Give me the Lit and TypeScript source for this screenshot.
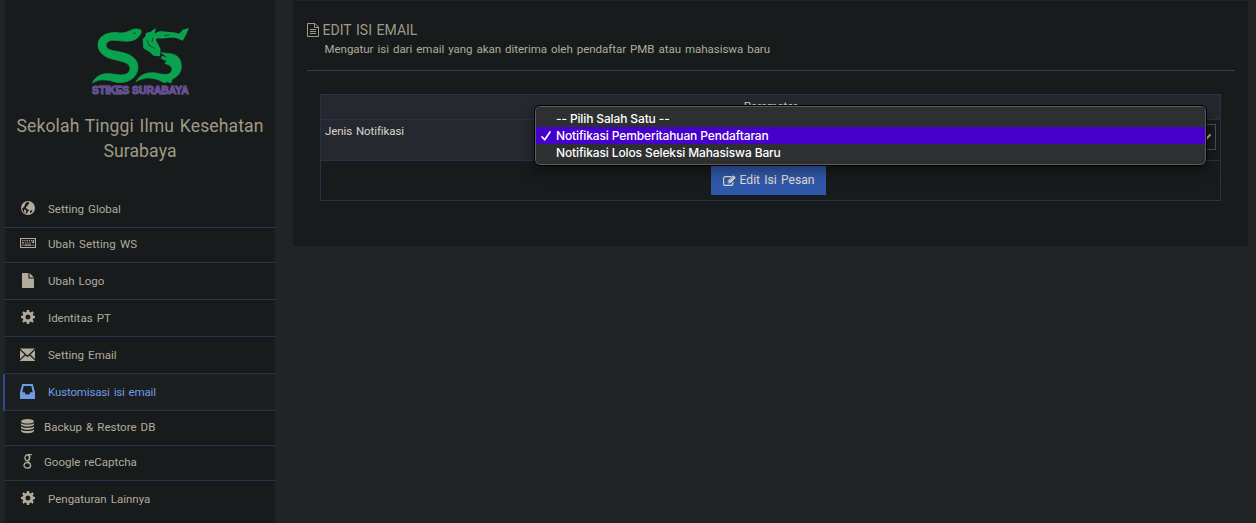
import { LitElement, html, css, svg } from "lit";
import { customElement } from "lit/decorators.js";

const globe = svg`<circle cx="7" cy="7" r="7"/><g fill="#171b1b"><path d="M5.600 1.200 7.400 1.100 8.300 2.200 7.700 3.300 6.500 3.900 6.700 5 5.300 5.600 4.700 6.900 6 8 7.700 8.700 8 9.400 6.800 10.500 5.900 12.800C3 12.200 1.200 10 1.100 7.200L2.500 6.600 3.700 4.600 4.200 2.700Z"/><path d="M8.800 10 11.200 8.900 11.300 10.500 9.300 12.200Z"/></g><path d="M3 8.200 5.200 9.500 5 12.200 3.200 11Z"/>`;
const keyboard = svg`<path fill-rule="evenodd" d="M0 2h16v10H0ZM1.100 3.100v7.800h13.800V3.100Z"/><path d="M2.200 4h1.200v1.200H2.200zm2.200 0h1.200v1.200H4.400zm2.200 0h1.200v1.200H6.600zm2.200 0H10v1.200H8.800zm2.200 0h1.200v1.200H11zm1.800 0h1.200v3h-2V6h.8zM2.200 6.200H4v1.200H2.200zm2.800 0h1.200v1.200H5zm2.200 0h1.200v1.200H7.200zm2.200 0h1.200v1.200H9.400zM2.200 8.500h1.200v1.200H2.200zm2.200 0h7v1.200h-7zm8.200 0h1.200v1.200h-1.200z"/>`;
const file = svg`<path d="M0 0H6.400v5.600H12V15H0Z"/><path d="M7.500 0 12 4.500H7.500Z"/>`;
const gear = svg`<path fill-rule="evenodd" d="M5.900 0h2.200l.4 1.900 1.300.5L11.400 1.300 12.800 2.700 11.700 4.300l.5 1.200 1.800.4v2.200l-1.800.4-.5 1.300 1.100 1.500-1.400 1.500-1.600-1.200-1.300.5L8.100 14H5.900l-.4-1.900-1.300-.5-1.600 1.200-1.400-1.500 1.100-1.500-.5-1.300L0 8.100V5.900l1.800-.4.5-1.200L1.200 2.700 2.600 1.300l1.600 1.100 1.300-.5ZM7 4.500A2.500 2.500 0 1 0 7 9.500 2.500 2.500 0 0 0 7 4.500Z"/>`;
const mail = svg`<path d="M0 .6h15L7.500 7.400ZM0 2.200 4.600 6.400 0 11ZM15 2.200 10.400 6.400 15 11ZM5.500 7.400 7.500 9.200 9.500 7.400 15 12.600V13H0v-.4Z"/>`;
const inbox = svg`<path fill-rule="evenodd" d="M2.200 0h10.600L15 8.500V15H0V8.500ZM3.700 1.900 2.300 8.300H4.700L5.700 10.500H9.300L10.300 8.300H12.700L11.300 1.900Z"/>`;
const database = svg`<ellipse cx="6.500" cy="2.300" rx="6.500" ry="2.300"/><path d="M0 3.900c1.500 2 11.500 2 13 0v1.800c-1.500 2.400-11.500 2.400-13 0ZM0 7.200c1.500 2 11.500 2 13 0V9c-1.500 2.400-11.500 2.400-13 0ZM0 10.500c1.500 2 11.500 2 13 0v1.600c-1.500 2.900-11.500 2.900-13 0Z"/>`;
const google = svg`<g fill="none" stroke="currentColor" stroke-width="1.300"><ellipse cx="4.200" cy="3.800" rx="2.200" ry="3"/><path d="M4.200.7H8.900M6 1.200C7.300 2.600 7 4.900 5.400 6.300C4.100 7.500 5.200 8 6.400 8.900"/><ellipse cx="4.300" cy="11.400" rx="3.300" ry="2.700"/></g>`;
const fileText = svg`<path fill="none" stroke="currentColor" d="M.5.5H8L11.500 4V13.500H.5ZM7.500.5V4.500H11.500M3 6.500H9M3 8.500H9M3 10.500H9"/>`;
const edit = svg`<path fill="none" stroke="currentColor" stroke-width="1.100" d="M8.500 1.600H2.300Q.6 1.600.6 3.300V8.700Q.6 10.400 2.300 10.400H8.200Q9.900 10.400 9.900 8.700V6.900"/><path fill-rule="evenodd" d="M10.300.2 12.800 2.700 7.300 8.200H4.800V5.700ZM5.600 6 7 7.400 6.500 7.600H5.400V6.500ZM9.600 2 6.500 5.100 6.800 5.400 9.900 2.300Z"/>`;

const logo = svg`
  <g fill="#0aa24f">
    <path stroke="#0aa24f" stroke-width="2" d="M37 204C48 180 72 171 105 178C130 183 150 178 150 160C150 143 125 139 95 132C65 124 52 105 54 85C58 60 85 50 115 53C138 56 145 48 160 43C172 40 185 42 184 50C182 62 168 75 155 77C135 82 120 76 100 76C84 76 76 84 79 96C85 107 105 107 125 112C155 118 176 135 174 160C170 192 140 208 105 201C80 194 58 190 37 204Z"/>
    <path stroke="#0aa24f" stroke-width="2" d="M168 200C180 176 208 168 238 176C262 182 276 176 276 162C274 150 264 151 255 145L260 138 243 130 246 124 264 128 243 113 272 116C294 119 306 135 304 158C302 178 288 187 277 192L273 204 263 200 252 203 238 196C213 186 190 186 168 200Z"/>
    <path d="M190 100 188 72 196 64 198 54 212 50 228 38 224 54 232 66 228 76 236 90 242 104 240 124 220 122 210 112Z"/>
    <path d="M224 56C240 43 258 52 276 52 286 50 290 57 299 55L308 44 327 39 319 58 308 77 288 69C268 66 250 72 230 70Z"/>
  </g>
  <path fill="none" stroke="#171b1b" stroke-width="2" d="M160 55 168 54M201 76 208 92 224 100M218 68 216 82M252 62 268 59"/>
  <text x="36" y="238" textLength="290" lengthAdjust="spacingAndGlyphs" font-family="Liberation Sans, sans-serif" font-size="30" font-weight="700" fill="#6444ab" stroke="#6f6a80" stroke-width="3" paint-order="stroke" letter-spacing="0" word-spacing="0">STIKES SURABAYA</text>`;

interface Item { label: string; icon: unknown; w: number; h: number; cls: string; }

const items: Item[] = [
  { label: "Setting Global", icon: globe, w: 14, h: 14, cls: "first" },
  { label: "Ubah Setting WS", icon: keyboard, w: 16, h: 14, cls: "short wide" },
  { label: "Ubah Logo", icon: file, w: 12, h: 15, cls: "" },
  { label: "Identitas PT", icon: gear, w: 14, h: 14, cls: "" },
  { label: "Setting Email", icon: mail, w: 15, h: 13, cls: "" },
  { label: "Kustomisasi isi email", icon: inbox, w: 15, h: 15, cls: "active" },
  { label: "Backup & Restore DB", icon: database, w: 13, h: 15, cls: "short tight" },
  { label: "Google reCaptcha", icon: google, w: 9, h: 15, cls: "short tight" },
  { label: "Pengaturan Lainnya", icon: gear, w: 14, h: 14, cls: "last" },
];

const options = ["-- Pilih Salah Satu --", "Notifikasi Pemberitahuan Pendaftaran", "Notifikasi Lolos Seleksi Mahasiswa Baru"];

@customElement("app-root")
export class AppRoot extends LitElement {
  static styles = css`
    :host { display: flex; box-sizing: border-box; height: 523px; overflow: hidden; padding: 0 8px 0 5px; gap: 18px; background: #202424; color: #b2ab9b; font: 11.5px/16px Roboto, sans-serif; word-spacing: 1.2px; }
    * { box-sizing: border-box; }
    svg { display: block; fill: currentColor; flex: none; }
    .side { width: 270px; flex: none; background: #171b1b; }
    .brand { height: 190px; padding-top: 26px; text-align: center; color: #a19987; font-size: 17.6px; line-height: 25px; letter-spacing: .1px; }
    .logo { margin: 0 auto 17px; width: 100px; height: 71px; }
    .item { display: flex; align-items: center; height: 37px; border-bottom: 1px solid #253450; }
    .item.first { height: 38px; }
    .item.short { height: 35px; padding-bottom: 2px; }
    .item.wide { letter-spacing: .1px; }
    .item.last { border: 0; padding-bottom: 2px; }
    .item.active { color: #6f9be0; background: #1b1f20; margin-left: -2px; border-left: 2px solid #2b4a92; letter-spacing: -.15px; }
    .ico { width: 45px; margin-right: -2px; padding-bottom: 2px; display: flex; justify-content: center; }
    .tight .ico { margin-right: -6px; }
    .main { flex: 1; height: 245px; margin-top: 1px; background: #171b1b; padding: 21px 13px 0 14px; }
    .head { border-bottom: 1px solid #3a3e3d; height: 49px; }
    .title { display: flex; align-items: center; gap: 4px; margin-left: -.5px; font-size: 14px; color: #a19987; height: 16px; }
    .sub { padding-left: 17.500px; margin-top: 3px; letter-spacing: -.03px; }
    .table { margin: 23px 14px 0 13px; border: 1px solid #28334a; height: 107px; color: #d8d6ce; }
    .th { height: 25px; background: #262830; border-bottom: 1px solid #28334a; text-align: center; padding-top: 3px; }
    .tr { height: 41px; border-bottom: 1px solid #28334a; display: flex; }
    .lab { width: 215px; background: #262830; padding: 3px 4px; letter-spacing: -.1px; }
    .cell { flex: 1; position: relative; padding: 4px; }
    .select { height: 26px; border: 1px solid #4b4f4e; display: flex; align-items: center; justify-content: flex-end; padding-right: 3px; color: #b2ab9b; }
    .menu { position: absolute; left: -2px; top: -15px; right: 13px; height: 61px; border: 1px solid #000; border-radius: 6px; background: #2d2f30; box-shadow: inset 0 0 0 1px #585a5b, 0 5px 14px rgba(0,0,0,.4); color: #fff; font: 500 12px/17px Inter, sans-serif; letter-spacing: -.13px; word-spacing: 0; padding: 4px 1px; z-index: 1; }
    .opt { height: 17px; padding-left: 20px; display: flex; align-items: center; position: relative; }
    .opt.on { background: #4600cc; }
    .opt svg { position: absolute; left: 5px; top: 4px; }
    .foot { display: flex; justify-content: center; padding: 5px 4px 0 0; }
    .btn { width: 115px; height: 29px; padding-bottom: 1px; background: #3058a8; color: #e0ddd5; display: flex; align-items: center; justify-content: center; gap: 4px; font-size: 12.1px; }
  `;
  render() {
    return html`
      <nav class="side">
        <div class="brand"><svg class="logo" viewBox="30 33 300 213">${logo}</svg>Sekolah Tinggi Ilmu Kesehatan<br />Surabaya</div>
        ${items.map(i => html`<div class="item ${i.cls}"><span class="ico"><svg width=${i.w} height=${i.h} viewBox="0 0 ${i.w} ${i.h}">${i.icon}</svg></span><span>${i.label}</span></div>`)}
      </nav>
      <main class="main">
        <div class="head">
          <div class="title"><svg width="12" height="14" viewBox="0 0 12 14">${fileText}</svg><span>EDIT ISI EMAIL</span></div>
          <div class="sub">Mengatur isi dari email yang akan diterima oleh pendaftar PMB atau mahasiswa baru</div>
        </div>
        <div class="table">
          <div class="th">Parameter</div>
          <div class="tr">
            <div class="lab">Jenis Notifikasi</div>
            <div class="cell">
              <div class="select"><svg width="12" height="8" viewBox="0 0 12 8"><path d="M1.500 1.500 6 6 10.500 1.500" fill="none" stroke="currentColor" stroke-width="2"/></svg></div>
              <div class="menu">
                ${options.map((o, n) => html`<div class="opt ${n === 1 ? "on" : ""}">${n === 1 ? html`<svg width="10" height="10" viewBox="0 0 10 10"><path d="M1 5.800 3.700 8.800 9 1" fill="none" stroke="currentColor" stroke-width="1.700" stroke-linecap="round" stroke-linejoin="round"/></svg>` : ""}<span>${o}</span></div>`)}
              </div>
            </div>
          </div>
          <div class="foot"><div class="btn"><svg width="13" height="11" viewBox="0 0 13 11">${edit}</svg><span>Edit Isi Pesan</span></div></div>
        </div>
      </main>`;
  }
}
